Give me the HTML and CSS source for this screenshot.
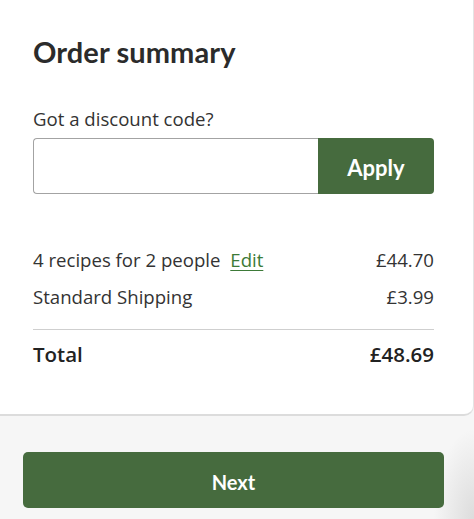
FILE: index.html
```html
<!DOCTYPE html>
<html lang="en">
<head>
<meta charset="utf-8">
<link rel="stylesheet" href="styles.css">
</head>
<body>
<div class="page">
  <section class="card">
    <h1 class="title">Order summary</h1>
    <label class="label" for="code">Got a discount code?</label>
    <div class="discount">
      <input id="code" class="code-input" type="text">
      <button class="apply">Apply</button>
    </div>
    <div class="lines">
      <div class="row"><span>4 recipes for 2 people <a class="edit" href="#">Edit</a></span><span>£44.70</span></div>
      <div class="row"><span>Standard Shipping</span><span>£3.99</span></div>
    </div>
    <div class="row total"><span>Total</span><span>£48.69</span></div>
  </section>
  <div class="footer">
    <button class="next">Next</button>
  </div>
</div>
</body>
</html>
```
FILE: styles.css
```css
html, body {
  margin: 0;
  padding: 0;
  background: #f6f6f6;
}
body {
  font-family: "Open Sans", "Liberation Sans", sans-serif;
  color: #333;
  overflow: hidden;
}
.page {
  width: 474px;
  height: 519px;
  overflow: hidden;
  background: radial-gradient(ellipse 40px 90px at 100% 100%, #dcdcdc, rgba(246,246,246,0));
}
.card {
  background: #fff;
  margin-left: -10px;
  width: 484px;
  box-sizing: border-box;
  padding: 34px 39px 0 43px;
  height: 416px;
  border-bottom: 2px solid #dcdcdc;
  border-right: 1px solid #e4e4e4;
  border-bottom-right-radius: 10px;
}
.title {
  margin: 0;
  font-family: "Lato", "Liberation Sans", sans-serif;
  font-weight: 700;
  font-size: 29px;
  line-height: 36px;
  color: #2b2b2b;
  letter-spacing: 0.1px;
}
.label {
  display: block;
  margin-top: 37px;
  font-size: 18.6px;
  line-height: 24px;
}
.discount {
  display: flex;
  margin-top: 7px;
  height: 56px;
}
.code-input {
  flex: 1;
  box-sizing: border-box;
  height: 56px;
  border: 1px solid #a3a3a3;
  border-right: none;
  border-radius: 4px 0 0 4px;
  margin: 0;
  padding: 0 12px;
  font: inherit;
}
.apply {
  width: 116px;
  height: 56px;
  border: none;
  margin: 0;
  padding: 2px 0 0;
  background: #466b3e;
  color: #fff;
  border-radius: 0 4px 4px 0;
  font-family: "Lato", "Liberation Sans", sans-serif;
  font-weight: 700;
  font-size: 22px;
}
.lines {
  margin-top: 54px;
  display: flex;
  flex-direction: column;
  gap: 13px;
  padding-bottom: 20px;
  border-bottom: 1px solid #cfcfcf;
}
.row {
  display: flex;
  justify-content: space-between;
  font-size: 18.6px;
  line-height: 24px;
}
.edit {
  color: #3d7a38;
  margin-left: 5px;
  text-decoration: underline;
  text-underline-offset: 3px;
}
.total {
  margin-top: 12px;
  font-weight: 600;
  font-size: 20.5px;
  color: #222;
}
.footer {
  padding: 36px 30px 0 23px;
}
.next {
  width: 421px;
  height: 56px;
  border: none;
  border-radius: 5px;
  padding: 3px 0 0;
  background: #466b3e;
  color: #fff;
  font-family: "Lato", "Liberation Sans", sans-serif;
  font-weight: 700;
  font-size: 20px;
}
```
